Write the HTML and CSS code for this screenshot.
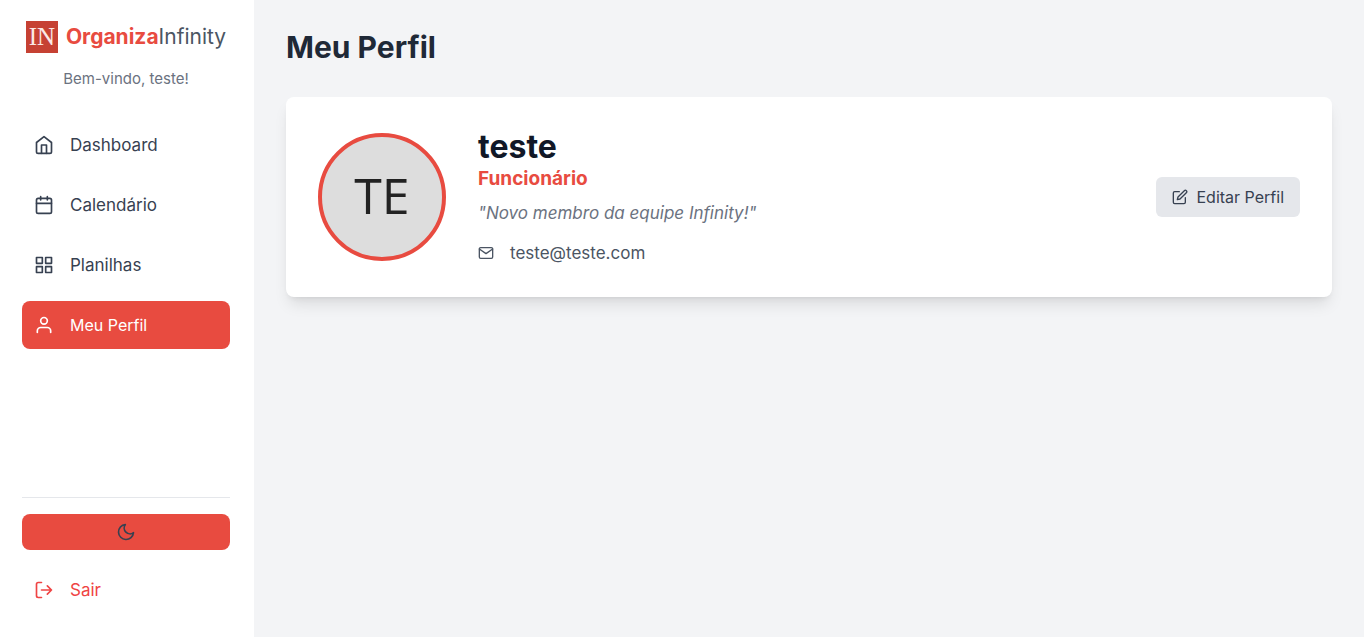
FILE: index.html
```html
<!DOCTYPE html>
<html lang="pt-BR">
<head>
<meta charset="utf-8">
<meta name="viewport" content="width=device-width, initial-scale=1">
<title>Meu Perfil - OrganizaInfinity</title>
<link rel="stylesheet" href="styles.css">
</head>
<body>
<div class="layout">
  <aside class="sidebar">
    <div class="brand">
      <span class="brand-mark" aria-hidden="true">IN</span>
      <span class="brand-name"><strong>Organiza</strong>Infinity</span>
    </div>
    <p class="welcome">Bem-vindo, teste!</p>
    <nav class="nav">
      <a class="nav-item" href="#dashboard">
        <svg class="icon" viewBox="0 0 24 24"><path d="M3 9l9-7 9 7v11a2 2 0 0 1-2 2H5a2 2 0 0 1-2-2z"/><path d="M9 22V12h6v10"/></svg>
        <span>Dashboard</span>
      </a>
      <a class="nav-item" href="#calendario">
        <svg class="icon" viewBox="0 0 24 24"><rect x="3" y="4" width="18" height="18" rx="2"/><path d="M16 2v4M8 2v4M3 10h18"/></svg>
        <span>Calendário</span>
      </a>
      <a class="nav-item" href="#planilhas">
        <svg class="icon" viewBox="0 0 24 24"><path d="M3 3h7v7H3zM14 3h7v7h-7zM14 14h7v7h-7zM3 14h7v7H3z"/></svg>
        <span>Planilhas</span>
      </a>
      <a class="nav-item active" href="#perfil" aria-current="page">
        <svg class="icon" viewBox="0 0 24 24"><path d="M20 21v-2a4 4 0 0 0-4-4H8a4 4 0 0 0-4 4v2"/><circle cx="12" cy="7" r="4"/></svg>
        <span>Meu Perfil</span>
      </a>
    </nav>
    <div class="sidebar-footer">
      <button class="theme-toggle" type="button" aria-label="Alternar tema">
        <svg class="icon" viewBox="0 0 24 24"><path d="M21 12.79A9 9 0 1 1 11.21 3 7 7 0 0 0 21 12.79z"/></svg>
      </button>
      <a class="nav-item logout" href="#sair">
        <svg class="icon" viewBox="0 0 24 24"><path d="M9 21H5a2 2 0 0 1-2-2V5a2 2 0 0 1 2-2h4M16 17l5-5-5-5M21 12H9"/></svg>
        <span>Sair</span>
      </a>
    </div>
  </aside>
  <main class="content">
    <h1 class="title">Meu Perfil</h1>
    <section class="card">
      <div class="avatar" role="img" aria-label="Avatar de teste">TE</div>
      <div class="info">
        <h2 class="name">teste</h2>
        <p class="role">Funcionário</p>
        <p class="bio">"Novo membro da equipe Infinity!"</p>
        <p class="email">
          <svg class="icon icon-small" viewBox="0 0 24 24"><path d="M4 4h16a2 2 0 0 1 2 2v12a2 2 0 0 1-2 2H4a2 2 0 0 1-2-2V6a2 2 0 0 1 2-2z"/><path d="M22 6l-10 7L2 6"/></svg>
          <span>teste@teste.com</span>
        </p>
      </div>
      <button class="edit" type="button">
        <svg class="icon icon-small" viewBox="0 0 24 24"><path d="M11 4H4a2 2 0 0 0-2 2v14a2 2 0 0 0 2 2h14a2 2 0 0 0 2-2v-7"/><path d="M18.5 2.5a2.121 2.121 0 0 1 3 3L12 15l-4 1 1-4z"/></svg>
        <span>Editar Perfil</span>
      </button>
    </section>
  </main>
</div>
</body>
</html>
```
FILE: styles.css
```css
:root {
  --red: #e84b40;
}

* {
  box-sizing: border-box;
}

body,
h1,
h2,
p {
  margin: 0;
}

body {
  background: #f3f4f6;
  color: #374151;
  font-family: Inter, "Open Sans", sans-serif;
  font-size: 17px;
  line-height: 24px;
}

.layout {
  display: flex;
  min-height: 100vh;
}

.icon {
  width: 20px;
  height: 20px;
  flex: none;
  fill: none;
  stroke: currentColor;
  stroke-width: 2;
  stroke-linecap: round;
  stroke-linejoin: round;
}

.icon-small {
  width: 16px;
  height: 16px;
}

.sidebar {
  width: 254px;
  flex: none;
  display: flex;
  flex-direction: column;
  padding: 21px 24px 23px 22px;
  background: #fff;
}

.brand {
  display: flex;
  align-items: center;
  justify-content: center;
  gap: 8px;
  height: 32px;
}

.brand-mark {
  width: 32px;
  height: 32px;
  background: #c64133;
  color: #fbe9e6;
  font-family: "Liberation Serif", serif;
  font-size: 25px;
  line-height: 32px;
  text-align: center;
}

.brand-name {
  color: #4b5563;
  font-size: 21px;
}

.brand-name strong {
  color: var(--red);
}

.welcome {
  margin: 14px 0 30px;
  color: #6b7280;
  font-size: 15px;
  text-align: center;
}

.nav {
  display: flex;
  flex-direction: column;
  gap: 12px;
}

.nav-item {
  display: flex;
  align-items: center;
  gap: 16px;
  padding: 12px;
  border-radius: 8px;
  color: inherit;
  text-decoration: none;
}

.nav-item.active {
  background: var(--red);
  color: #fff;
  font-size: 16px;
}

.sidebar-footer {
  display: flex;
  flex-direction: column;
  gap: 16px;
  margin-top: auto;
  padding-top: 16px;
  border-top: 1px solid #e5e7eb;
}

.theme-toggle {
  display: flex;
  justify-content: center;
  padding: 8px;
  border: 0;
  border-radius: 8px;
  background: var(--red);
  color: #374151;
}

.nav-item.logout {
  color: #ef4444;
}

.content {
  flex: 1;
  min-width: 0;
  padding: 29px 32px;
}

.title {
  margin-bottom: 32px;
  color: #1f2937;
  font-size: 30px;
  line-height: 36px;
}

.card {
  display: flex;
  align-items: center;
  gap: 32px;
  padding: 32px;
  border-radius: 8px;
  background: #fff;
  box-shadow: 0 10px 15px -3px rgba(0, 0, 0, 0.1), 0 4px 6px -4px rgba(0, 0, 0, 0.1);
}

.avatar {
  display: flex;
  align-items: center;
  justify-content: center;
  width: 128px;
  height: 128px;
  flex: none;
  padding-bottom: 4px;
  border: 4px solid var(--red);
  border-radius: 50%;
  background: #ddd;
  color: #222;
  font-family: "Open Sans", sans-serif;
  font-size: 50px;
}

.info {
  flex: 1;
  min-width: 0;
}

.name {
  color: #111827;
  font-size: 32px;
  line-height: 36px;
}

.role {
  color: var(--red);
  font-size: 19px;
  font-weight: 700;
  line-height: 28px;
}

.bio {
  margin-top: 8px;
  color: #6b7280;
  font-style: italic;
}

.email {
  display: flex;
  align-items: center;
  gap: 16px;
  margin-top: 16px;
  color: #4b5563;
}

.edit {
  display: flex;
  align-items: center;
  gap: 8px;
  padding: 8px 16px;
  border: 0;
  border-radius: 6px;
  background: #e5e7eb;
  color: #374151;
  font: inherit;
  font-size: 16px;
}
```
